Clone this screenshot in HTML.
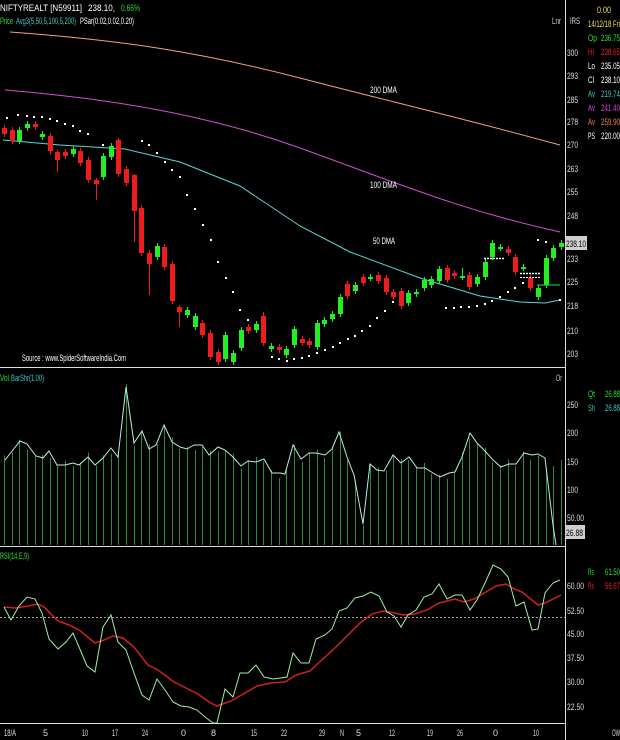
<!DOCTYPE html>
<html><head><meta charset="utf-8"><style>
html,body{margin:0;padding:0;background:#000;}
svg{display:block;}
text{font-family:"Liberation Sans",sans-serif;font-size:9px;}
</style></head><body>
<svg id="s" width="620" height="740" viewBox="0 0 620 740" xmlns="http://www.w3.org/2000/svg">
<rect width="620" height="740" fill="#000"/>
<line x1="565.5" y1="0" x2="565.5" y2="740" stroke="#ddd" stroke-width="1"/>
<line x1="0" y1="367.5" x2="565" y2="367.5" stroke="#ddd"/>
<line x1="0" y1="546.5" x2="565" y2="546.5" stroke="#ddd"/>
<line x1="0" y1="723.5" x2="565" y2="723.5" stroke="#ddd"/>
<line x1="0" y1="617.5" x2="565" y2="617.5" stroke="#ddd" stroke-dasharray="2,2" stroke-width="0.8"/>
<g id="g"></g>
<g>
<text x="0" y="11" fill="#fff" textLength="82" lengthAdjust="spacingAndGlyphs">NIFTYREALT [N59911]</text>
<text x="88" y="11" fill="#fff" textLength="27" lengthAdjust="spacingAndGlyphs">238.10,</text>
<text x="121" y="11" fill="#2be02b" textLength="19" lengthAdjust="spacingAndGlyphs">0.66%</text>
<text x="0" y="24" fill="#2be02b" textLength="13" lengthAdjust="spacingAndGlyphs">Price</text>
<text x="16" y="24" fill="#39c7c7" textLength="60" lengthAdjust="spacingAndGlyphs">Avg3(5,50,5,100,5,200)</text>
<text x="80" y="24" fill="#fff" textLength="54" lengthAdjust="spacingAndGlyphs">PSar(0.02,0.02,0.20)</text>
<text x="370" y="93" fill="#fff" textLength="27" lengthAdjust="spacingAndGlyphs">200 DMA</text>
<text x="370" y="188" fill="#fff" textLength="27" lengthAdjust="spacingAndGlyphs">100 DMA</text>
<text x="373" y="244" fill="#fff" textLength="22" lengthAdjust="spacingAndGlyphs">50 DMA</text>
<text x="22" y="361" fill="#fff" textLength="104" lengthAdjust="spacingAndGlyphs">Source : www.SpiderSoftwareIndia.Com</text>
<text x="552" y="24" fill="#ccc" textLength="9" lengthAdjust="spacingAndGlyphs">Lnr</text>
<g fill="#ddd">
<text x="570" y="24" textLength="10" lengthAdjust="spacingAndGlyphs">IRS</text>
<text x="567" y="56" textLength="11" lengthAdjust="spacingAndGlyphs">300</text><text x="567" y="79" textLength="11" lengthAdjust="spacingAndGlyphs">293</text><text x="567" y="103" textLength="11" lengthAdjust="spacingAndGlyphs">285</text>
<text x="567" y="125" textLength="11" lengthAdjust="spacingAndGlyphs">278</text><text x="567" y="148" textLength="11" lengthAdjust="spacingAndGlyphs">270</text><text x="567" y="172" textLength="11" lengthAdjust="spacingAndGlyphs">263</text>
<text x="567" y="195" textLength="11" lengthAdjust="spacingAndGlyphs">255</text><text x="567" y="219" textLength="11" lengthAdjust="spacingAndGlyphs">248</text>
<text x="567" y="262" textLength="11" lengthAdjust="spacingAndGlyphs">233</text><text x="567" y="285" textLength="11" lengthAdjust="spacingAndGlyphs">225</text><text x="567" y="309" textLength="11" lengthAdjust="spacingAndGlyphs">218</text>
<text x="567" y="334" textLength="11" lengthAdjust="spacingAndGlyphs">210</text><text x="567" y="357" textLength="11" lengthAdjust="spacingAndGlyphs">203</text>
</g>
<rect x="565" y="236" width="22" height="14" fill="#cfcfcf"/>
<text x="566" y="247" fill="#000" textLength="20" lengthAdjust="spacingAndGlyphs">238.10</text>
<text x="597" y="13" fill="#e8e050" textLength="14" lengthAdjust="spacingAndGlyphs">0.00</text>
<text x="588" y="27" fill="#e8e050" textLength="32" lengthAdjust="spacingAndGlyphs">14/12/18 Fri</text>
<text x="588" y="41" fill="#2be02b" textLength="9" lengthAdjust="spacingAndGlyphs">Op</text><text x="601" y="41" fill="#2be02b" textLength="19" lengthAdjust="spacingAndGlyphs">236.75</text>
<text x="588" y="55" fill="#f02020" textLength="6" lengthAdjust="spacingAndGlyphs">Hi</text><text x="601" y="55" fill="#f02020" textLength="19" lengthAdjust="spacingAndGlyphs">238.65</text>
<text x="588" y="69" fill="#fff" textLength="7" lengthAdjust="spacingAndGlyphs">Lo</text><text x="601" y="69" fill="#fff" textLength="19" lengthAdjust="spacingAndGlyphs">235.05</text>
<text x="588" y="83" fill="#fff" textLength="6" lengthAdjust="spacingAndGlyphs">Cl</text><text x="601" y="83" fill="#fff" textLength="19" lengthAdjust="spacingAndGlyphs">238.10</text>
<text x="588" y="97" fill="#39c7c7" textLength="7" lengthAdjust="spacingAndGlyphs">Av</text><text x="601" y="97" fill="#39c7c7" textLength="19" lengthAdjust="spacingAndGlyphs">219.74</text>
<text x="588" y="111" fill="#e040e0" textLength="7" lengthAdjust="spacingAndGlyphs">Av</text><text x="601" y="111" fill="#e040e0" textLength="19" lengthAdjust="spacingAndGlyphs">241.40</text>
<text x="588" y="125" fill="#f08040" textLength="7" lengthAdjust="spacingAndGlyphs">Av</text><text x="601" y="125" fill="#f08040" textLength="19" lengthAdjust="spacingAndGlyphs">259.90</text>
<text x="588" y="139" fill="#fff" textLength="7" lengthAdjust="spacingAndGlyphs">PS</text><text x="601" y="139" fill="#fff" textLength="19" lengthAdjust="spacingAndGlyphs">220.00</text>
<text x="0" y="381" fill="#2be02b" textLength="9" lengthAdjust="spacingAndGlyphs">Vol</text>
<text x="11" y="381" fill="#39c7c7" textLength="33" lengthAdjust="spacingAndGlyphs">BarShr(1.00)</text>
<text x="556" y="381" fill="#ccc" textLength="6" lengthAdjust="spacingAndGlyphs">Or</text>
<g fill="#ddd">
<text x="567" y="408" textLength="11" lengthAdjust="spacingAndGlyphs">250</text><text x="567" y="436" textLength="11" lengthAdjust="spacingAndGlyphs">200</text><text x="567" y="465" textLength="11" lengthAdjust="spacingAndGlyphs">150</text>
<text x="567" y="493" textLength="11" lengthAdjust="spacingAndGlyphs">100</text><text x="567" y="521" textLength="17" lengthAdjust="spacingAndGlyphs">50.00</text>
</g>
<rect x="565" y="525" width="20" height="14" fill="#cfcfcf"/>
<text x="566" y="536" fill="#000" textLength="17" lengthAdjust="spacingAndGlyphs">26.88</text>
<text x="588" y="397" fill="#2be02b" textLength="7" lengthAdjust="spacingAndGlyphs">Qt</text><text x="605" y="397" fill="#2be02b" textLength="15" lengthAdjust="spacingAndGlyphs">26.88</text>
<text x="588" y="411" fill="#39c7c7" textLength="7" lengthAdjust="spacingAndGlyphs">Sh</text><text x="605" y="411" fill="#39c7c7" textLength="15" lengthAdjust="spacingAndGlyphs">26.88</text>
<text x="0" y="559" fill="#2be02b" textLength="29" lengthAdjust="spacingAndGlyphs">RSI(14,E,9)</text>
<g fill="#ddd">
<text x="567" y="589" textLength="17" lengthAdjust="spacingAndGlyphs">60.00</text><text x="567" y="614" textLength="17" lengthAdjust="spacingAndGlyphs">52.50</text><text x="567" y="637" textLength="17" lengthAdjust="spacingAndGlyphs">45.00</text>
<text x="567" y="661" textLength="17" lengthAdjust="spacingAndGlyphs">37.50</text><text x="567" y="685" textLength="17" lengthAdjust="spacingAndGlyphs">30.00</text><text x="567" y="710" textLength="17" lengthAdjust="spacingAndGlyphs">22.50</text>
</g>
<text x="588" y="575" fill="#2be02b" textLength="6" lengthAdjust="spacingAndGlyphs">Rs</text><text x="605" y="575" fill="#2be02b" textLength="15" lengthAdjust="spacingAndGlyphs">61.50</text>
<text x="588" y="589" fill="#f02020" textLength="6" lengthAdjust="spacingAndGlyphs">Rs</text><text x="605" y="589" fill="#f02020" textLength="15" lengthAdjust="spacingAndGlyphs">56.67</text>
<g fill="#ddd">
<text x="4" y="736" textLength="12" lengthAdjust="spacingAndGlyphs">18/A</text><text x="43" y="736">5</text><text x="82" y="736" textLength="6" lengthAdjust="spacingAndGlyphs">10</text>
<text x="112" y="736" textLength="6" lengthAdjust="spacingAndGlyphs">17</text><text x="142" y="736" textLength="6" lengthAdjust="spacingAndGlyphs">24</text><text x="181" y="736">0</text>
<text x="211" y="736">8</text><text x="251" y="736" textLength="6" lengthAdjust="spacingAndGlyphs">15</text><text x="281" y="736" textLength="6" lengthAdjust="spacingAndGlyphs">22</text>
<text x="319" y="736" textLength="6" lengthAdjust="spacingAndGlyphs">29</text><text x="340" y="736" textLength="4" lengthAdjust="spacingAndGlyphs">N</text><text x="356" y="736">5</text>
<text x="389" y="736" textLength="6" lengthAdjust="spacingAndGlyphs">12</text><text x="427" y="736" textLength="6" lengthAdjust="spacingAndGlyphs">19</text><text x="457" y="736" textLength="6" lengthAdjust="spacingAndGlyphs">26</text>
<text x="493" y="736">0</text><text x="533" y="736" textLength="6" lengthAdjust="spacingAndGlyphs">10</text><text x="612" y="736" textLength="8" lengthAdjust="spacingAndGlyphs">OW</text>
</g>
</g>
</svg>
<script>
var g=document.getElementById('g'),NS='http://www.w3.org/2000/svg';
function el(t,a){var e=document.createElementNS(NS,t);for(var k in a)e.setAttribute(k,a[k]);g.appendChild(e);return e;}
function pl(pts,c,w,d){el('polyline',{points:pts.map(function(p){return p.join(',')}).join(' '),fill:'none',stroke:c,'stroke-width':w||1,'stroke-dasharray':d||''});}
el('path',{d:'M10,32 C120,40 200,52 300,78 S450,115 560,145',fill:'none',stroke:'#f4a07a','stroke-width':1});
el('path',{d:'M5,90 C100,98 200,112 300,148 S460,210 560,232',fill:'none',stroke:'#d050d0','stroke-width':1});
pl([[3,140],[60,145],[125,149],[180,162],[240,186],[300,226],[350,252],[420,278],[480,296],[520,302],[545,303],[560,300]],'#58d8d8',1);
var vl=[[2,462],[5,460],[20,441],[27,444],[36,456],[43,458],[49,451],[57,465],[65,465],[73,463],[79,465],[88,457],[95,465],[103,458],[111,448],[118,457],[126,387],[134,443],[142,431],[149,449],[156,445],[164,425],[172,442],[180,447],[187,449],[194,445],[202,445],[209,455],[218,447],[225,450],[233,457],[241,466],[248,461],[256,462],[264,459],[272,473],[280,473],[285,474],[293,445],[301,459],[309,453],[316,453],[325,455],[332,449],[339,432],[347,457],[354,475],[363,524],[370,464],[377,470],[384,471],[393,455],[401,463],[409,457],[417,468],[425,468],[433,473],[440,477],[449,473],[455,472],[462,457],[470,433],[477,443],[485,451],[493,460],[501,467],[509,464],[516,464],[524,453],[532,455],[538,454],[545,458],[553,525],[556,545]];
for(var i=0;i<74;i++){var x=Math.round(4+i*7.63)+0.5;var y=460;for(var j=0;j<vl.length-1;j++){if(vl[j][0]<=x&&vl[j+1][0]>=x){var t=(x-vl[j][0])/(vl[j+1][0]-vl[j][0]||1);y=vl[j][1]+t*(vl[j+1][1]-vl[j][1]);}}
if(i==16)y=387;if(i==72)y=462;el('line',{x1:x,y1:545,x2:x,y2:y+((i*7)%11)-5,stroke:'#2f8a3a','stroke-width':1});}
pl(vl.slice(1),'#b8f0e0',1);
pl([[4,607],[16,608],[28,606],[38,604],[44,607],[58,621],[69,625],[79,630],[95,643],[104,640],[113,636],[123,638],[134,647],[148,665],[158,670],[174,682],[186,688],[198,694],[209,702],[217,706],[231,701],[245,693],[257,686],[271,683],[285,682],[296,675],[310,671],[324,658],[336,647],[348,635],[360,623],[372,614],[383,611],[395,613],[403,615],[415,614],[427,610],[439,603],[455,599],[464,602],[474,599],[486,592],[496,586],[506,584],[514,589],[522,592],[538,605],[545,603],[561,595]],'#d02020',1.5);
pl([[4,607],[11,620],[19,606],[27,597],[35,599],[42,613],[49,639],[58,649],[66,642],[73,633],[79,647],[87,666],[95,672],[103,627],[111,615],[118,642],[126,650],[134,673],[142,695],[149,700],[157,679],[165,690],[173,702],[181,706],[189,707],[197,710],[205,717],[213,723],[217,723],[225,689],[233,697],[240,673],[248,673],[256,665],[264,677],[273,679],[281,678],[287,677],[293,653],[301,663],[309,663],[316,639],[325,635],[332,629],[339,611],[347,608],[355,598],[363,596],[371,592],[379,596],[387,612],[394,616],[401,627],[408,615],[416,610],[424,597],[432,594],[439,584],[447,599],[455,595],[462,595],[470,610],[477,600],[485,583],[493,565],[501,569],[508,577],[516,606],[524,602],[532,630],[538,629],[545,593],[553,583],[560,580]],'#9ef09e',1);
var sar=[[7,118],[18,115],[27,116],[34,117],[42,117],[50,119],[57,121],[65,124],[73,126],[80,131],[88,134],[103,145],[142,141],[149,145],[157,153],[165,162],[172,170],[180,177],[187,195],[195,209],[203,225],[211,240],[218,262],[226,278],[233,292],[240,310],[248,320],[256,329],[264,334],[272,357],[279,359],[287,361],[294,359],[302,358],[309,356],[317,353],[325,350],[333,347],[340,343],[348,339],[355,336],[362,331],[370,326],[377,318],[385,311],[393,302],[446,308],[454,308],[461,307],[469,307],[477,306],[485,304],[492,301],[500,297],[508,292],[515,288],[523,283],[538,240],[546,242],[560,300]];
sar.forEach(function(p){el('rect',{x:p[0]-1,y:p[1]-1,width:2,height:2,fill:'#fff'});});
var C=[['r',128,134],['r',130,141],['g',130,141],['g',124,128],['r',124,127],['g',134,137],['r',136,151,133,155],['r',152,160,150,172],['r',152,156],['g',149,154],['r',151,163],['r',160,180],['r',180,184,178,200],['g',156,177],['g',146,157],['r',140,174,138,177],['r',169,183],['r',175,211,174,242],['r',208,253],['r',253,264,250,295],['g',246,257],['r',247,267],['r',264,301],['r',307,312,305,327],['g',310,315],['g',316,327],['r',323,335],['r',333,357],['r',352,362],['g',335,359],['g',353,362],['g',330,348],['r',327,331],['g',324,330],['r',316,343,312,346],['g',346,349],['r',347,350],['g',349,355],['g',329,345],['r',339,343],['r',341,345],['g',323,347],['g',320,324],['g',314,319],['g',297,314],['r',284,296],['g',285,291],['r',277,283],['g',277,278],['r',275,281],['r',278,292],['r',292,297],['r',291,306],['g',293,303],['g',292,294],['g',280,288],['g',279,285],['g',269,281],['r',268,280],['r',273,276],['g',276,277,268,280],['r',275,287],['g',277,284],['g',262,277],['g',243,257],['g',247,248],['r',249,253],['r',257,272],['g',267,268],['r',278,288],['g',288,297],['g',258,285],['g',248,258],['g',243,247]];
C.forEach(function(c,i){var x=Math.round(4+i*7.63);var col=c[0]=='r'?'#ee1c1c':'#22ee22';var wt=c[3]||c[1]-3,wb=c[4]||c[2]+3;
el('line',{x1:x+0.5,y1:wt,x2:x+0.5,y2:wb,stroke:col,'stroke-width':1});el('rect',{x:x-2,y:c[1],width:5,height:Math.max(2,c[2]-c[1]),fill:col});});
pl([[484,258.5],[505,258.5]],'#fff',1.5,'2,1');pl([[520,273.5],[540,273.5]],'#fff',1.5,'2,1');pl([[520,277.5],[540,277.5]],'#fff',1,'2,1');
pl([[537,285],[560,285]],'#22ee22',1);
</script>
</body></html>
